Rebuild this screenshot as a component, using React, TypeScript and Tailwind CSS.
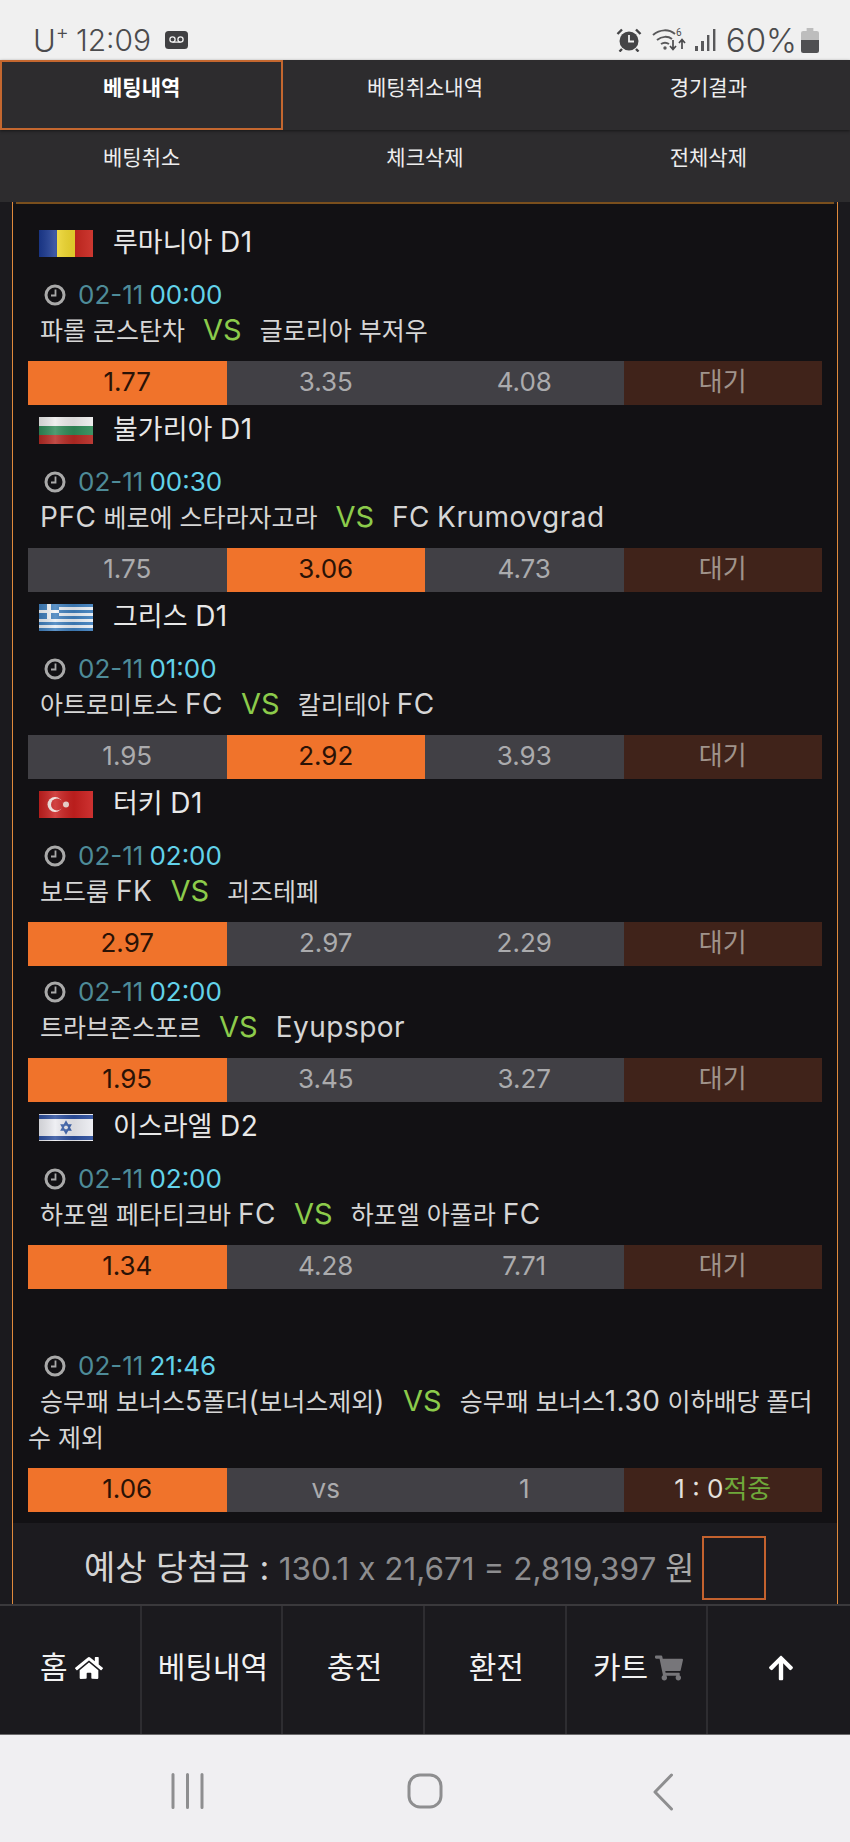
import React from 'react';
import { FaHome, FaShoppingCart, FaArrowUp } from 'react-icons/fa';

type Flag = 'ro' | 'bg' | 'gr' | 'tr' | 'il';

interface Match {
  league?: string;
  flag?: Flag;
  spacer?: boolean;
  date: string;
  time: string;
  home: string;
  away: string;
  odds: string[];
  selected: number;
  result?: boolean;
}

const matches: Match[] = [
  { league: '루마니아 D1', flag: 'ro', date: '02-11', time: '00:00', home: '파롤 콘스탄차', away: '글로리아 부저우', odds: ['1.77', '3.35', '4.08'], selected: 0 },
  { league: '불가리아 D1', flag: 'bg', date: '02-11', time: '00:30', home: 'PFC 베로에 스타라자고라', away: 'FC Krumovgrad', odds: ['1.75', '3.06', '4.73'], selected: 1 },
  { league: '그리스 D1', flag: 'gr', date: '02-11', time: '01:00', home: '아트로미토스 FC', away: '칼리테아 FC', odds: ['1.95', '2.92', '3.93'], selected: 1 },
  { league: '터키 D1', flag: 'tr', date: '02-11', time: '02:00', home: '보드룸 FK', away: '괴즈테페', odds: ['2.97', '2.97', '2.29'], selected: 0 },
  { date: '02-11', time: '02:00', home: '트라브존스포르', away: 'Eyupspor', odds: ['1.95', '3.45', '3.27'], selected: 0 },
  { league: '이스라엘 D2', flag: 'il', date: '02-11', time: '02:00', home: '하포엘 페타티크바 FC', away: '하포엘 아풀라 FC', odds: ['1.34', '4.28', '7.71'], selected: 0 },
  { spacer: true, date: '02-11', time: '21:46', home: '승무패 보너스5폴더(보너스제외)', away: '승무패 보너스1.30 이하배당 폴더 수 제외', odds: ['1.06', 'vs', '1'], selected: 0, result: true },
];

// latin runs are set a bit bigger than the hangul around them
function Mixed({ text }: { text: string }) {
  return (
    <>
      {text.split(/([A-Za-z0-9.,()]+)/).map((part, i) =>
        i % 2 === 1 ? (
          <span key={i} className="text-[28px] leading-none tracking-[0.5px]">
            {part}
          </span>
        ) : (
          part
        )
      )}
    </>
  );
}

function FlagIcon({ code }: { code: Flag }) {
  return (
    <svg width="54" height="27" viewBox="0 0 54 27" className="shrink-0">
      <defs>
        <linearGradient id={`shine-${code}`} x1="0" y1="0" x2="1" y2="0">
          <stop offset="0" stopColor="#000" stopOpacity="0.12" />
          <stop offset="0.3" stopColor="#fff" stopOpacity="0.16" />
          <stop offset="0.65" stopColor="#000" stopOpacity="0.08" />
          <stop offset="1" stopColor="#fff" stopOpacity="0.08" />
        </linearGradient>
      </defs>
      {code === 'ro' && (
        <>
          <rect width="18" height="27" fill="#1c3b94" />
          <rect x="18" width="18" height="27" fill="#f1d92e" />
          <rect x="36" width="18" height="27" fill="#c8271f" />
        </>
      )}
      {code === 'bg' && (
        <>
          <rect width="54" height="9" fill="#ececec" />
          <rect y="9" width="54" height="9" fill="#2f8a58" />
          <rect y="18" width="54" height="9" fill="#b52a24" />
        </>
      )}
      {code === 'gr' && (
        <>
          <rect width="54" height="27" fill="#e8eef5" />
          {[0, 6, 12, 18, 24].map((y) => (
            <rect key={y} y={y} width="54" height="3" fill="#3f7fbd" />
          ))}
          <rect width="20" height="15" fill="#3f7fbd" />
          <rect x="8" width="4" height="15" fill="#f2f5f8" />
          <rect y="6" width="20" height="3" fill="#f2f5f8" />
        </>
      )}
      {code === 'tr' && (
        <>
          <rect width="54" height="27" fill="#c9201f" />
          <circle cx="16" cy="13.5" r="7.5" fill="#f3e4e0" />
          <circle cx="18" cy="13.5" r="6" fill="#c9201f" />
          <circle cx="27" cy="13.5" r="3" fill="#f3d8d2" />
        </>
      )}
      {code === 'il' && (
        <>
          <rect width="54" height="27" fill="#ecedf2" />
          <rect y="1" width="54" height="4" fill="#2c4f9e" />
          <rect y="22" width="54" height="4" fill="#2c4f9e" />
          <path d="M27 8l4.5 8h-9zM27 19l-4.5-8h9z" fill="none" stroke="#3e64ad" strokeWidth="1.6" />
        </>
      )}
      <rect width="54" height="27" fill={`url(#shine-${code})`} />
    </svg>
  );
}

function ClockIcon() {
  return (
    <svg width="22" height="22" viewBox="0 0 22 22" className="shrink-0">
      <circle cx="11" cy="11" r="9" fill="none" stroke="#a9a9a9" strokeWidth="3" />
      <path d="M11.5 5.5v6H7" fill="none" stroke="#a9a9a9" strokeWidth="1.8" />
    </svg>
  );
}

function StatusBar() {
  return (
    <div className="h-[60px] shrink-0 bg-[#f0f0f0] flex items-center text-[#4b4b4d] pt-[20px]">
      <div className="ml-[33px] text-[31px] font-light leading-none flex items-start">
        U<span className="text-[20px] leading-none -mt-[3px]">+</span>
      </div>
      <div className="ml-[7px] text-[30px] font-light leading-none">12:09</div>
      <svg width="23" height="18" viewBox="0 0 23 18" className="ml-[14px]">
        <rect width="23" height="18" rx="3.5" fill="#404042" />
        <circle cx="7.5" cy="8.5" r="2.6" fill="none" stroke="#f0f0f0" strokeWidth="1.3" />
        <circle cx="15.5" cy="8.5" r="2.6" fill="none" stroke="#f0f0f0" strokeWidth="1.3" />
        <path d="M7.5 11.1h8" stroke="#f0f0f0" strokeWidth="1.3" />
      </svg>
      <div className="ml-auto flex items-center">
        <svg width="26" height="24" viewBox="0 0 26 24">
          <circle cx="13" cy="13" r="9.5" fill="#444446" />
          <path d="M13 7v6.5h5" fill="none" stroke="#f0f0f0" strokeWidth="1.8" />
          <path d="M1.5 6L6 1.5M24.5 6L20 1.5M6 21l-2.5 2.5M20 21l2.5 2.5" stroke="#444446" strokeWidth="2.4" />
        </svg>
        <svg width="36" height="26" viewBox="0 0 36 26" className="ml-[10px]">
          <path d="M1 8c7-6 16-6 22-1M5 13c5-4 11-4 15-1M9 17c3-2 5-2 8 0" fill="none" stroke="#58585a" strokeWidth="2" />
          <circle cx="13" cy="21" r="1.7" fill="#58585a" />
          <text x="24" y="9" fontSize="10" fill="#4b4b4d" fontFamily="Roboto, sans-serif">6</text>
          <path d="M21 13v9M18 19l3 3.5 3-3.5M30 22v-9M27 16l3-3.5 3 3.5" fill="none" stroke="#4b4b4d" strokeWidth="1.7" />
        </svg>
        <svg width="22" height="24" viewBox="0 0 22 24" className="ml-[6px]">
          <rect x="1" y="18" width="3" height="5" fill="#58585a" />
          <rect x="7" y="13" width="3" height="10" fill="#58585a" />
          <rect x="13" y="7" width="2.4" height="16" fill="#58585a" />
          <rect x="19" y="1" width="2.4" height="22" fill="#58585a" />
        </svg>
        <div className="ml-[10px] text-[33px] font-light leading-none">60%</div>
        <svg width="18" height="25" viewBox="0 0 16 25" preserveAspectRatio="none" className="ml-[4px] mr-[31px]">
          <path d="M5 0h6v3h3a2 2 0 0 1 2 2v7H0V5a2 2 0 0 1 2-2h3z" fill="#bdbdbd" />
          <path d="M0 12h16v11a2 2 0 0 1-2 2H2a2 2 0 0 1-2-2z" fill="#505052" />
        </svg>
      </div>
    </div>
  );
}

function Tabs() {
  const cell = 'h-full flex justify-center pt-[14px] text-[21px] leading-[28px] text-[#eeeeee]';
  return (
    <div className="shrink-0 bg-[#2d2c2e]">
      <div className="h-[70px] grid grid-cols-3 shadow-[0_1px_3px_rgba(0,0,0,0.5)]">
        <div className="h-full flex justify-center pt-[12px] text-[21px] leading-[28px] font-bold text-white border-2 border-[#c4672f]">
          베팅내역
        </div>
        <div className={cell}>베팅취소내역</div>
        <div className={cell}>경기결과</div>
      </div>
      <div className="h-[72px] grid grid-cols-3">
        <div className={cell}>베팅취소</div>
        <div className={cell}>체크삭제</div>
        <div className={cell}>전체삭제</div>
      </div>
    </div>
  );
}

function MatchBlock({ match }: { match: Match }) {
  return (
    <div>
      {match.league && match.flag && (
        <div className="h-[51px] flex items-center pl-[11px]">
          <FlagIcon code={match.flag} />
          <span className="ml-[20px] pb-[3px] text-[27px] leading-none text-[#e8e8e8]">
            <Mixed text={match.league} />
          </span>
        </div>
      )}
      {match.spacer && <div className="h-[51px]" />}
      <div className="h-[44px] pt-[8px] flex items-center pl-[16px]">
        <ClockIcon />
        <span className="ml-[12px] text-[26px] leading-none text-[#4e8b98]">{match.date}</span>
        <span className="ml-[6px] text-[26px] leading-none text-[#62d2ea]">{match.time}</span>
      </div>
      <div className="indent-[12px] text-[25px] leading-[36px] text-[#d6d6d6] mb-[12px]">
        <Mixed text={match.home} />
        <span className="mx-[18px] text-[29px] leading-none text-[#8ccb4b]">VS</span>
        <Mixed text={match.away} />
      </div>
      <div className="h-[44px] grid grid-cols-4 text-[26px] leading-none">
        {match.odds.map((odd, i) => (
          <div
            key={i}
            className={
              i === match.selected
                ? 'flex items-center justify-center pb-[2px] bg-[#f0732b] text-[#2a1206]'
                : 'flex items-center justify-center pb-[2px] bg-[#414045] text-[#ababad]'
            }
          >
            {odd}
          </div>
        ))}
        <div className="flex items-center justify-center pb-[2px] bg-[#40231a] text-[#a0938b]">
          {match.result ? (
            <>
              <span className="text-[#e4e0dc]">1 : 0</span>
              <span className="text-[#6fa83a]">적중</span>
            </>
          ) : (
            '대기'
          )}
        </div>
      </div>
    </div>
  );
}

function BottomNav() {
  const cell = 'flex items-center justify-center gap-[7px] border-r-2 border-[#2e2d31] pb-[5px] pl-[3px]';
  return (
    <div className="h-[131px] shrink-0 grid grid-cols-6 bg-[#1b1a1e] border-t-2 border-[#3a393c] border-b border-b-[#6b6a6c] text-[30px] text-[#f2f2f2]">
      <div className={cell}>
        홈 <FaHome size={28} className="text-white" />
      </div>
      <div className={cell}>베팅내역</div>
      <div className={cell}>충전</div>
      <div className={cell}>환전</div>
      <div className={cell}>
        카트 <FaShoppingCart size={28} className="text-[#77767a]" />
      </div>
      <div className="flex items-center justify-center pb-[5px] pl-[3px]">
        <FaArrowUp size={28} className="text-white" />
      </div>
    </div>
  );
}

function SystemNav() {
  return (
    <div className="flex-1 bg-[#f0eff2] flex items-start pt-[38px]">
      <div className="w-[283px] flex justify-center pl-[92px]">
        <svg width="33" height="36" viewBox="0 0 33 36">
          <path d="M2 1.5v33M16.5 1.5v33M31 1.5v33" stroke="#8e8e90" strokeWidth="3" strokeLinecap="round" />
        </svg>
      </div>
      <div className="w-[284px] flex justify-center">
        <svg width="36" height="36" viewBox="0 0 36 36">
          <rect x="2" y="2" width="32" height="32" rx="11" fill="none" stroke="#8e8e90" strokeWidth="3" />
        </svg>
      </div>
      <div className="w-[283px] pl-[85px]">
        <svg width="22" height="38" viewBox="0 0 22 38">
          <path d="M19.5 2L3 19l16.5 17" fill="none" stroke="#8e8e90" strokeWidth="3" strokeLinecap="round" strokeLinejoin="round" />
        </svg>
      </div>
    </div>
  );
}

export default function App() {
  return (
    <div className="w-[850px] h-[1842px] overflow-hidden flex flex-col bg-[#1b1a1e] font-['Inter','Noto_Sans_CJK_KR',sans-serif]">
      <StatusBar />
      <Tabs />
      <div className="flex-1 min-h-0 overflow-hidden px-[12px]">
        <div className="h-full border-x border-[#e08a3c] bg-[#1c1b1f]">
          <div className="h-[2px] mx-[3px] bg-[#7a4f1d]" />
          <div className="bg-[#121114] px-[15px] pt-[14px] pb-[11px]">
            {matches.map((m, i) => (
              <MatchBlock key={i} match={m} />
            ))}
          </div>
          <div className="mt-[13px] flex items-center justify-center gap-[8px]">
            <div className="text-[31.5px] leading-none text-[#8d8d8f]">
              <span className="text-[34px] leading-none text-[#d4d4d4]">예상 당첨금 : </span>
              130.1 x 21,671 = 2,819,397 <span className="text-[#a8a8a8]">원</span>
            </div>
            <div className="w-[64px] h-[64px] border-2 border-[#c4622e]" />
          </div>
        </div>
      </div>
      <BottomNav />
      <div className="h-[107px] shrink-0 flex">
        <SystemNav />
      </div>
    </div>
  );
}
